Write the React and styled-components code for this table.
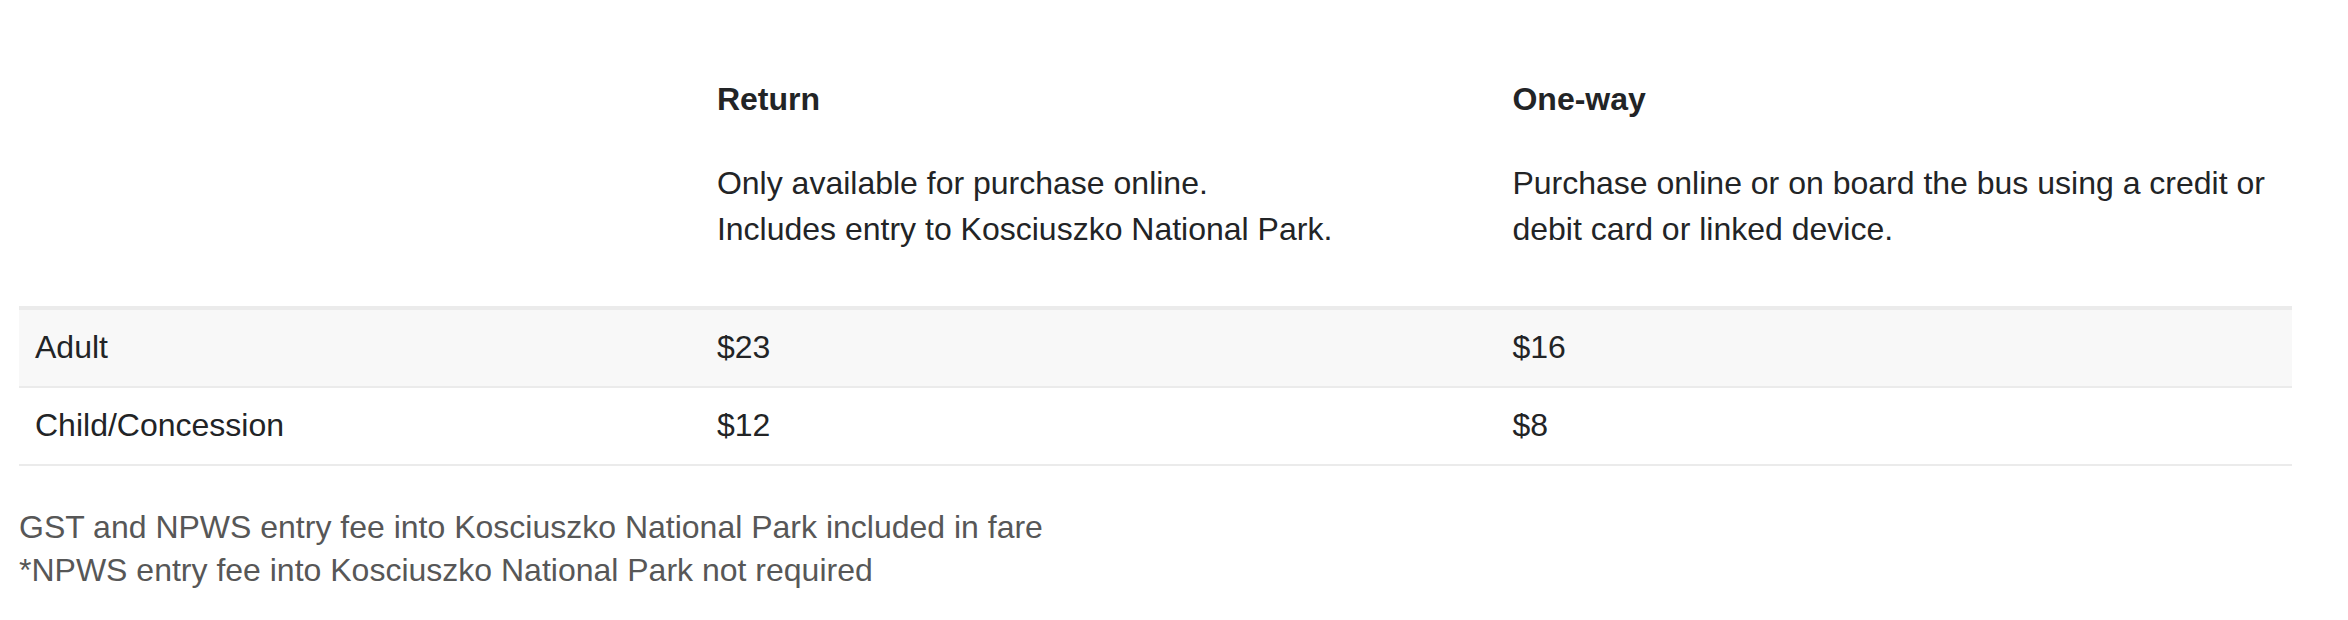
import React from 'react'
import styled, { createGlobalStyle } from 'styled-components'

const GlobalStyle = createGlobalStyle`
body {
  margin: 0;
  background: #ffffff;
  font-family: "Liberation Sans", Arial, sans-serif;
  color: #222426;
}
`

const fares = [
    { type: 'Adult', ret: '$23', oneWay: '$16' },
    { type: 'Child/Concession', ret: '$12', oneWay: '$8' },
]

export default function App() {
    return (
        <Page>
            <GlobalStyle />
            <FareTable>
                <colgroup>
                    <col width="30%" />
                    <col width="35%" />
                    <col width="35%" />
                </colgroup>
                <thead>
                    <tr>
                        <HeadCell />
                        <HeadCell>
                            <Title>Return</Title>
                            <Note>
                                Only available for purchase online.<br />
                                Includes entry to Kosciuszko National Park.
                            </Note>
                        </HeadCell>
                        <HeadCell>
                            <Title>One-way</Title>
                            <Note>
                                Purchase online or on board the bus using a credit or debit card or linked device.
                            </Note>
                        </HeadCell>
                    </tr>
                </thead>
                <tbody>
                    {fares.map((f, i) => (
                        <Row key={f.type} striped={i % 2 === 0}>
                            <Cell>{f.type}</Cell>
                            <Cell>{f.ret}</Cell>
                            <Cell>{f.oneWay}</Cell>
                        </Row>
                    ))}
                </tbody>
            </FareTable>
            <Footnotes>
                GST and NPWS entry fee into Kosciuszko National Park included in fare<br />
                *NPWS entry fee into Kosciuszko National Park not required
            </Footnotes>
        </Page>
    )
}

const Page = styled.div`
padding: 60px 0 0 19px;
width: 2273px;
`

const FareTable = styled.table`
width: 100%;
table-layout: fixed;
border-collapse: collapse;
font-size: 32px;
line-height: 44px;
`

const HeadCell = styled.th`
text-align: left;
vertical-align: top;
font-weight: normal;
padding: 16px 8px 54px 16px;
border-bottom: 4px solid #ebebeb;
`

const Title = styled.div`
font-weight: bold;
line-height: 46px;
margin-bottom: 38px;
`

const Note = styled.div`
line-height: 46px;
`

const Row = styled.tr`
background: ${p => (p.striped ? '#f8f8f8' : '#ffffff')};
border-bottom: 2px solid #ebebeb;
`

const Cell = styled.td`
padding: 15px 16px 17px;
`

const Footnotes = styled.p`
margin: 40px 0 0;
font-size: 32px;
line-height: 43px;
color: #575757;
`
